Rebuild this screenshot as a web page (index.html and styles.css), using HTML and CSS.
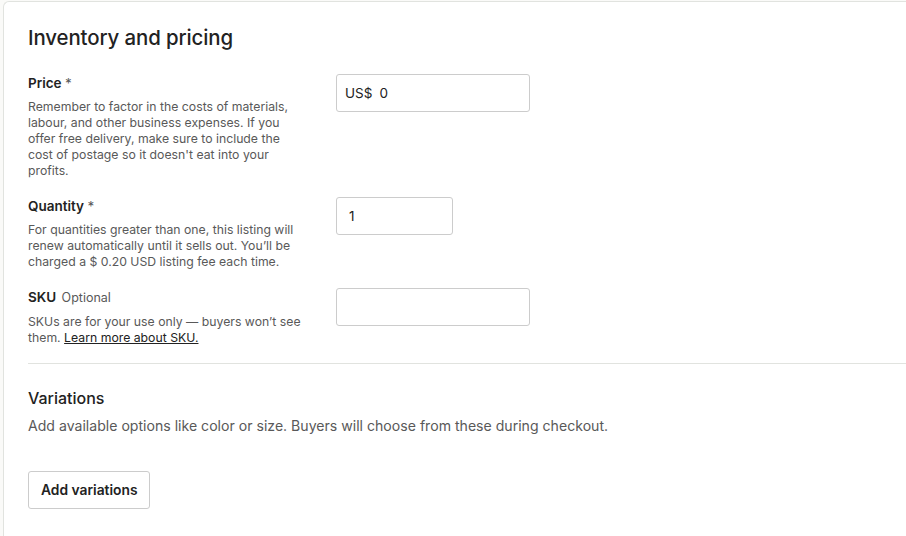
FILE: index.html
```html
<!DOCTYPE html>
<html lang="en">
<head>
<meta charset="utf-8">
<title>Inventory and pricing</title>
<link rel="stylesheet" href="styles.css">
</head>
<body>
<div class="card">
  <section class="section">
    <h2 class="title">Inventory and pricing</h2>
    <div class="rows">
      <div class="row">
        <div class="info">
          <div class="label">Price <span class="req">*</span></div>
          <p class="desc">Remember to factor in the costs of materials, labour, and other business expenses. If you offer free delivery, make sure to include the cost of postage so it doesn't eat into your profits.</p>
        </div>
        <div class="field field-wide"><span class="prefix">US$</span><span class="val">0</span></div>
      </div>
      <div class="row">
        <div class="info">
          <div class="label">Quantity <span class="req">*</span></div>
          <p class="desc">For quantities greater than one, this listing will renew automatically until it sells out. You’ll be charged a $ 0.20 USD listing fee each time.</p>
        </div>
        <div class="field field-narrow"><span class="val">1</span></div>
      </div>
      <div class="row">
        <div class="info">
          <div class="label">SKU <span class="opt">Optional</span></div>
          <p class="desc">SKUs are for your use only — buyers won’t see them. <a class="link" href="#">Learn more about SKU.</a></p>
        </div>
        <div class="field field-wide"></div>
      </div>
    </div>
  </section>
  <hr class="divider">
  <section class="section variations">
    <h3 class="subtitle">Variations</h3>
    <p class="vdesc">Add available options like color or size. Buyers will choose from these during checkout.</p>
    <button class="btn">Add variations</button>
  </section>
</div>
</body>
</html>
```
FILE: styles.css
```css
html, body {
  margin: 0;
  padding: 0;
  background: #fafaf8;
  overflow: hidden;
  height: 536px;
}
body {
  font-family: Inter, "Liberation Sans", sans-serif;
  color: #222222;
}
.card {
  margin: 1px 0 0 3px;
  width: 960px;
  height: 600px;
  background: #ffffff;
  border-top: 1px solid #e1e3df;
  border-left: 1px solid #e1e3df;
  border-top-left-radius: 6px;
  padding-left: 24px;
  box-sizing: border-box;
}
.section {
  padding-top: 22px;
}
.title {
  margin: 0;
  font-size: 20.4px;
  line-height: 28px;
  font-weight: 500;
  letter-spacing: -0.1px;
  color: #222;
}
.rows {
  margin-top: 21px;
  display: flex;
  flex-direction: column;
  gap: 17px;
}
.row {
  display: flex;
  align-items: flex-start;
}
.info {
  width: 274px;
  margin-right: 34px;
}
.label {
  font-size: 13.5px;
  line-height: 20px;
  font-weight: 600;
  color: #222;
}
.req {
  font-weight: 400;
  color: #595959;
}
.opt {
  font-weight: 400;
  font-size: 12.5px;
  color: #595959;
  margin-left: 2px;
}
.desc {
  margin: 6px 0 0;
  font-size: 12.25px;
  line-height: 16px;
  color: #595959;
}
.link {
  color: #222;
  text-decoration: underline;
}
.field {
  margin-top: 1px;
  height: 38px;
  box-sizing: border-box;
  border: 1px solid #cccccc;
  border-radius: 3px;
  display: flex;
  align-items: center;
  padding-left: 8px;
  font-size: 13.5px;
  color: #222;
}
.field-wide { width: 194px; }
.field-narrow { width: 117px; padding-left: 12px; }
.prefix { color: #222; margin-right: 7px; }
.divider {
  margin: 17px 0 0;
  border: 0;
  border-top: 1px solid #e1e3df;
  height: 0;
}
.variations {
  padding-top: 22px;
}
.subtitle {
  margin: 0;
  font-size: 16px;
  line-height: 24px;
  font-weight: 500;
  color: #222;
}
.vdesc {
  margin: 6px 0 0;
  font-size: 14.1px;
  line-height: 20px;
  color: #595959;
}
.btn {
  margin-top: 35px;
  height: 38px;
  padding: 0 12px;
  background: #fff;
  border: 1px solid #cccccc;
  border-radius: 3px;
  font-family: inherit;
  font-size: 13.8px;
  font-weight: 600;
  color: #222;
}
```
